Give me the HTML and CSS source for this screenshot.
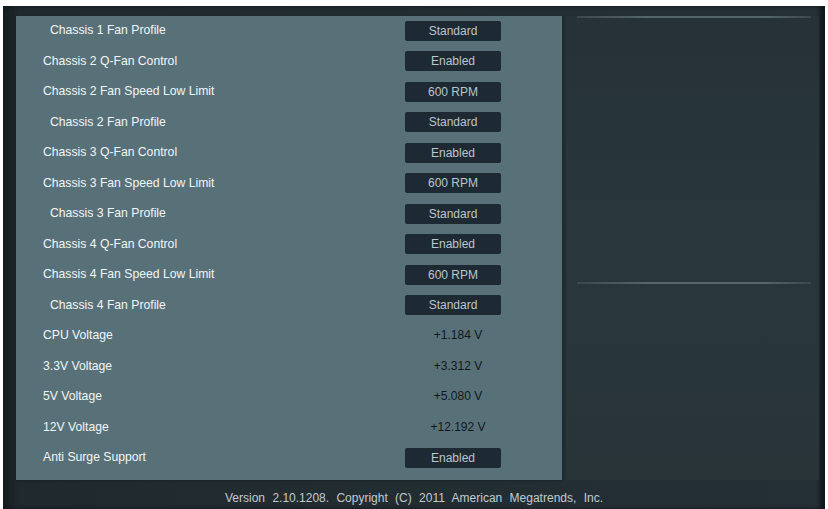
FILE: index.html
```html
<!DOCTYPE html>
<html lang="en">
<head>
    <meta charset="UTF-8">
    <title>Monitor</title>
    <link rel="stylesheet" href="styles.css">
</head>
<body>
    <div class="screen">
        <div class="main">
            <div class="settings">
                <div class="row sub"><span class="label">Chassis 1 Fan Profile</span><span class="btn">Standard</span></div>
                <div class="row"><span class="label">Chassis 2 Q-Fan Control</span><span class="btn">Enabled</span></div>
                <div class="row"><span class="label">Chassis 2 Fan Speed Low Limit</span><span class="btn">600 RPM</span></div>
                <div class="row sub"><span class="label">Chassis 2 Fan Profile</span><span class="btn">Standard</span></div>
                <div class="row"><span class="label">Chassis 3 Q-Fan Control</span><span class="btn">Enabled</span></div>
                <div class="row"><span class="label">Chassis 3 Fan Speed Low Limit</span><span class="btn">600 RPM</span></div>
                <div class="row sub"><span class="label">Chassis 3 Fan Profile</span><span class="btn">Standard</span></div>
                <div class="row"><span class="label">Chassis 4 Q-Fan Control</span><span class="btn">Enabled</span></div>
                <div class="row"><span class="label">Chassis 4 Fan Speed Low Limit</span><span class="btn">600 RPM</span></div>
                <div class="row sub"><span class="label">Chassis 4 Fan Profile</span><span class="btn">Standard</span></div>
                <div class="row"><span class="label">CPU Voltage</span><span class="value">+1.184 V</span></div>
                <div class="row"><span class="label">3.3V Voltage</span><span class="value">+3.312 V</span></div>
                <div class="row"><span class="label">5V Voltage</span><span class="value">+5.080 V</span></div>
                <div class="row"><span class="label">12V Voltage</span><span class="value">+12.192 V</span></div>
                <div class="row"><span class="label">Anti Surge Support</span><span class="btn">Enabled</span></div>
            </div>
            <div class="help">
                <div class="help-top"></div>
                <div class="help-bottom"></div>
            </div>
        </div>
        <div class="footer">Version 2.10.1208. Copyright (C) 2011 American Megatrends, Inc.</div>
    </div>
</body>
</html>
```

FILE: styles.css
```css
html, body {
    margin: 0;
    background: #ffffff;
}

body {
    font-family: "Liberation Sans", Arial, sans-serif;
    padding: 6px 3px 0 3px;
    height: 509px;
    box-sizing: border-box;
    overflow: hidden;
}

.screen {
    height: 503px;
    background: linear-gradient(90deg, #141c20 0%, #1f292e 2%, #222d32 50%, #253036 100%);
    box-shadow: inset -5px 0 4px #10171a;
    display: flex;
    flex-direction: column;
}

.main {
    display: flex;
    padding: 10px 6px 0 13px;
    height: 474px;
    box-sizing: border-box;
}

.settings {
    width: 546px;
    height: 464px;
    background: #587179;
    box-shadow: 0 1px 2px #1a2226;
    box-sizing: border-box;
}

.row {
    height: 30.5px;
    display: flex;
    align-items: center;
    padding-left: 27px;
    margin-top: -1px;
    margin-bottom: 1px;
}

.row.sub {
    padding-left: 34px;
}

.label {
    width: 362px;
    font-size: 12.2px;
    color: #f2f5f6;
}

.row.sub .label {
    width: 355px;
}

.btn {
    width: 96px;
    height: 20px;
    line-height: 20px;
    background: #1e2a33;
    border-radius: 2px;
    text-align: center;
    font-size: 12px;
    color: #bcc5ca;
    margin-top: 1px;
}

.value {
    width: 96px;
    text-align: center;
    font-size: 12px;
    color: #121819;
    padding-left: 5px;
}

.help {
    flex: 1;
    margin-left: 4px;
    height: 464px;
    background: linear-gradient(180deg, #263238 0%, #29363b 50%, #283438 100%);
    padding: 0 8px 0 11px;
}

.help-top {
    height: 2px;
    background: linear-gradient(90deg, #3b484d, #56656b 30%, #56656b 80%, #3b484d);
}

.help-bottom {
    height: 2px;
    margin-top: 264px;
    background: linear-gradient(90deg, #3b484d, #56656b 30%, #56656b 80%, #3b484d);
}

.footer {
    text-align: center;
    font-size: 12px;
    color: #c3cacf;
    word-spacing: 4px;
    padding-top: 11px;
}
```
